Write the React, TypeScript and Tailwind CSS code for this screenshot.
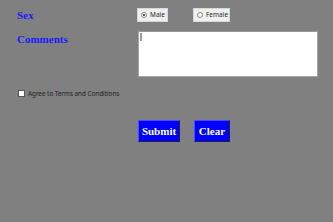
import React from "react";

const serif = { fontFamily: '"Liberation Serif", "Times New Roman", serif' };
const ui = { fontFamily: '"Noto Sans", "Open Sans", sans-serif' };

const Radio = ({
  label,
  checked,
  width,
}: {
  label: string;
  checked?: boolean;
  width: string;
}) => (
  <div
    className={`${width} flex items-center h-[14px] pl-[3px] gap-[3px] bg-[#f0f0f0] border border-[#d8d8d8] text-[6.5px] leading-[8px] text-[#2a2a2a] overflow-hidden`}
    style={ui}
  >
    <span className="shrink-0 w-[6px] h-[6px] rounded-full border border-[#8a8a8a] bg-white flex items-center justify-center">
      {checked && <span className="w-[2px] h-[2px] rounded-full bg-[#222]" />}
    </span>
    <span className="whitespace-nowrap">{label}</span>
  </div>
);

const Button = ({ label, width }: { label: string; width: string }) => (
  <button
    className={`${width} h-[22px] bg-[#0000ff] text-white font-bold text-[11px] border border-t-[#4a4aff] border-l-[#4a4aff] border-r-[#202040] border-b-[#202040] flex items-center justify-center`}
    style={serif}
  >
    {label}
  </button>
);

export default function App() {
  return (
    <div className="w-[333px] h-[222px] bg-[#808080] overflow-hidden pt-[8px]">
      <div className="flex items-center h-[14px]">
        <div
          className="w-[137px] pl-[17px] text-[11px] font-bold text-[#1a1aff]"
          style={serif}
        >
          Sex
        </div>
        <Radio label="Male" checked width="w-[31px]" />
        <div className="w-[25px]" />
        <Radio label="Female" width="w-[37px]" />
      </div>

      <div className="flex mt-[9px]">
        <div
          className="w-[138px] pl-[17px] pt-[1px] text-[11px] font-bold text-[#1a1aff] leading-[14px]"
          style={serif}
        >
          Comments
        </div>
        <div className="relative w-[180px] h-[46px] bg-white border border-[#a6a6a6] border-t-[#9a9a9a]">
          <span className="absolute left-[1px] top-[1px] w-[2px] h-[8px] bg-[#9a9a9a]" />
        </div>
      </div>

      <div className="flex items-center h-[7px] mt-[13px] pl-[18px] gap-[3px]">
        <span className="shrink-0 w-[7px] h-[7px] bg-white border border-[#555]" />
        <span className="text-[6.3px] leading-[7px] text-[#1e1e1e]" style={ui}>
          Agree to Terms and Conditions
        </span>
      </div>

      <div className="flex mt-[23px] pl-[138px] gap-[14px]">
        <Button label="Submit" width="w-[42px]" />
        <Button label="Clear" width="w-[36px]" />
      </div>
    </div>
  );
}
